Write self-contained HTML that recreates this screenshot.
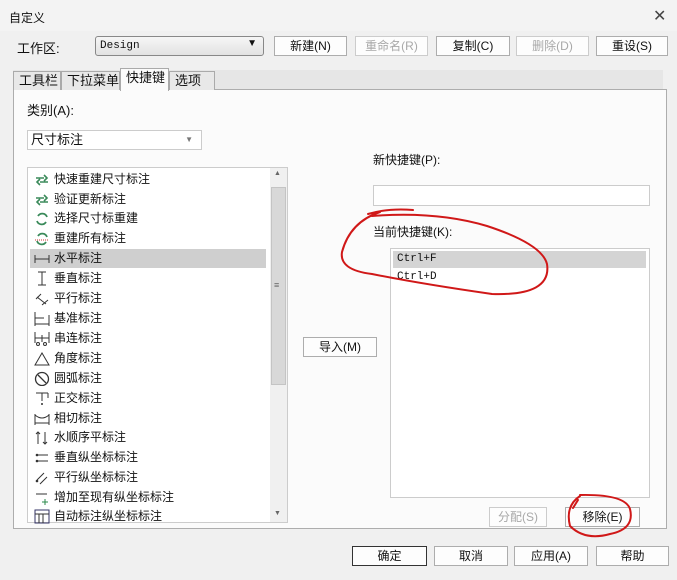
<!DOCTYPE html><html><head><meta charset="utf-8"><style>
*{box-sizing:border-box;margin:0;padding:0}
body{width:677px;height:580px;background:#f0f0f0;font-family:"Liberation Sans","Noto Sans CJK SC",sans-serif;font-size:12px;color:#111;position:relative;overflow:hidden}
.a{position:absolute}
.btn{position:absolute;height:20px;border:1px solid #adadad;background:#fdfdfd;text-align:center;line-height:18px;font-size:12px}
.dis{color:#a8a8a8;border-color:#ccc}
.tab{position:absolute;top:71px;height:19px;border:1px solid #aaa;border-bottom:none;background:#e8e8e8;font-size:13px;line-height:17px;padding-left:5px}
.it{position:absolute;left:30px;width:236px;height:19px;line-height:19px;font-size:12px;padding-left:24px}
.ic{position:absolute;left:4px;top:2px;width:16px;height:15px}
.mono{font-family:"Liberation Mono",monospace;font-size:11px}
</style></head><body>
<div class="a" style="left:0;top:0;width:677px;height:31px;background:#f3f3f3"></div>
<div class="a" style="left:9px;top:9px;font-size:12px">自定义</div>
<div class="a" style="left:653px;top:6px;font-size:16px;color:#444">✕</div>
<div class="a" style="left:17px;top:38px;font-size:13px">工作区:</div>
<div class="a" style="left:95px;top:36px;width:169px;height:20px;border:1px solid #888;border-radius:3px;background:linear-gradient(#f6f6f6,#e2e2e2)"><span class="mono" style="position:absolute;left:4px;top:3px">Design</span><span style="position:absolute;right:6px;top:1px;font-size:10px">▼</span></div>
<div class="btn" style="left:274px;top:36px;width:73px">新建(N)</div>
<div class="btn dis" style="left:355px;top:36px;width:73px">重命名(R)</div>
<div class="btn" style="left:436px;top:36px;width:74px">复制(C)</div>
<div class="btn dis" style="left:516px;top:36px;width:73px">删除(D)</div>
<div class="btn" style="left:596px;top:36px;width:72px">重设(S)</div>
<div class="a" style="left:13px;top:70px;width:650px;height:20px;background:#e6e6e6"></div>
<div class="a" style="left:13px;top:89px;width:654px;height:440px;border:1px solid #adadad;background:#fbfbfb"></div>
<div class="tab" style="left:13px;width:48px">工具栏</div>
<div class="tab" style="left:61px;width:59px">下拉菜单</div>
<div class="tab" style="left:120px;top:68px;height:23px;width:49px;background:#fbfbfb">快捷键</div>
<div class="tab" style="left:169px;width:46px">选项</div>
<div class="a" style="left:27px;top:100px;font-size:13px">类别(A):</div>
<div class="a" style="left:27px;top:130px;width:175px;height:20px;border:1px solid #ccc;background:#fff;font-size:13px;line-height:18px;padding-left:3px">尺寸标注<span style="position:absolute;right:8px;top:0;font-size:8px;color:#777">▼</span></div>
<div class="a" style="left:27px;top:167px;width:261px;height:356px;border:1px solid #ccc;background:#fff"></div>
<div class="a" style="left:270px;top:168px;width:17px;height:354px;background:#f0f0f0"></div>
<div class="a" style="left:271px;top:187px;width:15px;height:198px;background:#d8d8d8;border:1px solid #c4c4c4"></div>
<div class="a" style="left:274px;top:170px;font-size:7px;color:#666">▲</div>
<div class="a" style="left:274px;top:510px;font-size:7px;color:#666">▼</div>
<div class="a" style="left:274px;top:280px;font-size:9px;color:#666">≡</div>
<div class="a" style="left:30px;top:249px;width:236px;height:19px;background:#cfcfcf"></div>
<div class="it" style="top:170px"><svg class="ic"><path d="M2 6h8M10 3l3 3-3 3M14 10H6M6 13l-3-3 3-3" stroke="#3a8a5a" stroke-width="1.6" fill="none"/></svg>快速重建尺寸标注</div>
<div class="it" style="top:190px"><svg class="ic"><path d="M2 6h8M10 3l3 3-3 3M14 10H6M6 13l-3-3 3-3" stroke="#3a8a5a" stroke-width="1.6" fill="none"/></svg>验证更新标注</div>
<div class="it" style="top:209px"><svg class="ic"><path d="M4 5a5 5 0 0 1 9 1M12 11a5 5 0 0 1-9-1" stroke="#3a8a5a" stroke-width="1.8" fill="none"/></svg>选择尺寸标重建</div>
<div class="it" style="top:229px"><svg class="ic"><path d="M4 5a5 5 0 0 1 9 1M12 11a5 5 0 0 1-9-1" stroke="#3a8a5a" stroke-width="1.8" fill="none"/><path d="M1 9h14" stroke="#c33" stroke-dasharray="1 1"/></svg>重建所有标注</div>
<div class="it" style="top:249px"><svg class="ic"><path d="M1 4v8M15 4v8M1 8h14" stroke="#333" fill="none"/></svg>水平标注</div>
<div class="it" style="top:269px"><svg class="ic"><path d="M4 1h8M4 14h8M8 1v13" stroke="#333" fill="none"/></svg>垂直标注</div>
<div class="it" style="top:289px"><svg class="ic"><path d="M2 8l5-5M8 14l6-5M3 6l9 7" stroke="#333" fill="none"/></svg>平行标注</div>
<div class="it" style="top:309px"><svg class="ic"><path d="M1 1v14M15 4v11M1 7h9M1 13h14" stroke="#333" fill="none"/></svg>基准标注</div>
<div class="it" style="top:329px"><svg class="ic"><path d="M1 1v11M15 1v11M1 7h14M8 4v7" stroke="#333" fill="none"/><circle cx="4" cy="13" r="1.5" stroke="#333" fill="none"/><circle cx="11" cy="13" r="1.5" stroke="#333" fill="none"/></svg>串连标注</div>
<div class="it" style="top:349px"><svg class="ic"><path d="M8 2L1 14h14z" stroke="#333" fill="none"/></svg>角度标注</div>
<div class="it" style="top:369px"><svg class="ic"><circle cx="8" cy="8" r="6.5" stroke="#333" fill="none" stroke-width="1.3"/><path d="M4 4l8 8" stroke="#333" stroke-width="1.3"/></svg>圆弧标注</div>
<div class="it" style="top:389px"><svg class="ic"><path d="M2 2h12M8 2v8M14 2v5" stroke="#333" fill="none"/><circle cx="8" cy="13" r="1" fill="#333"/></svg>正交标注</div>
<div class="it" style="top:409px"><svg class="ic"><path d="M1 3v11M15 3v11M1 12h14M1 4q7 6 14 0" stroke="#333" fill="none"/></svg>相切标注</div>
<div class="it" style="top:428px"><svg class="ic"><path d="M4 2v12M11 2v12M2 4l2-2 2 2M9 12l2 2 2-2" stroke="#333" fill="none"/></svg>水顺序平标注</div>
<div class="it" style="top:448px"><svg class="ic"><path d="M3 5h11M3 11h11" stroke="#333" fill="none"/><circle cx="3" cy="5" r="1.3" fill="#333"/><circle cx="3" cy="11" r="1.3" fill="#333"/></svg>垂直纵坐标标注</div>
<div class="it" style="top:468px"><svg class="ic"><path d="M3 10l7-7M6 14l7-7" stroke="#333" fill="none"/><circle cx="3" cy="11" r="1.3" fill="#333"/></svg>平行纵坐标标注</div>
<div class="it" style="top:488px"><svg class="ic"><path d="M2 4h11M11 9v6M8 12h6" stroke="#333" fill="none"/><path d="M11 9v6M8 12h6" stroke="#2a8a4a"/></svg>增加至现有纵坐标标注</div>
<div class="it" style="top:507px"><svg class="ic"><rect x="1" y="1" width="14" height="13" stroke="#336" fill="none"/><path d="M1 5h14M5 5v9M9 5v9" stroke="#333"/></svg>自动标注纵坐标标注</div>
<div class="a" style="left:373px;top:151px;font-size:12px">新快捷键(P):</div>
<div class="a" style="left:373px;top:185px;width:277px;height:21px;border:1px solid #ccc;background:#fff"></div>
<div class="a" style="left:373px;top:223px;font-size:12px">当前快捷键(K):</div>
<div class="a" style="left:390px;top:248px;width:260px;height:250px;border:1px solid #ccc;background:#fff"></div>
<div class="a" style="left:393px;top:251px;width:253px;height:17px;background:#d4d4d4"></div>
<div class="a mono" style="left:397px;top:253px">Ctrl+F</div>
<div class="a mono" style="left:397px;top:271px">Ctrl+D</div>
<div class="btn" style="left:303px;top:337px;width:74px">导入(M)</div>
<div class="btn dis" style="left:489px;top:507px;width:58px">分配(S)</div>
<div class="btn" style="left:565px;top:507px;width:75px">移除(E)</div>
<div class="btn" style="left:352px;top:546px;width:75px;border-color:#333">确定</div>
<div class="btn" style="left:434px;top:546px;width:74px">取消</div>
<div class="btn" style="left:514px;top:546px;width:74px">应用(A)</div>
<div class="btn" style="left:596px;top:546px;width:73px">帮助</div>
<svg class="a" style="left:0;top:0" width="677" height="580"><g stroke="#d01818" stroke-width="2" fill="none" stroke-linecap="round">
<path d="M368 214q20-6 45-4M380 212q-30 10-38 40q-3 18 30 22q50 10 120 20q60 2 55-30q-5-20-60-38q-50-15-115-10"/>
<path d="M580 496q-15 10-10 30q15 15 40 8q25-5 20-25q-5-15-50-14M578 500l-5 8"/>
</g></svg>
</body></html>
